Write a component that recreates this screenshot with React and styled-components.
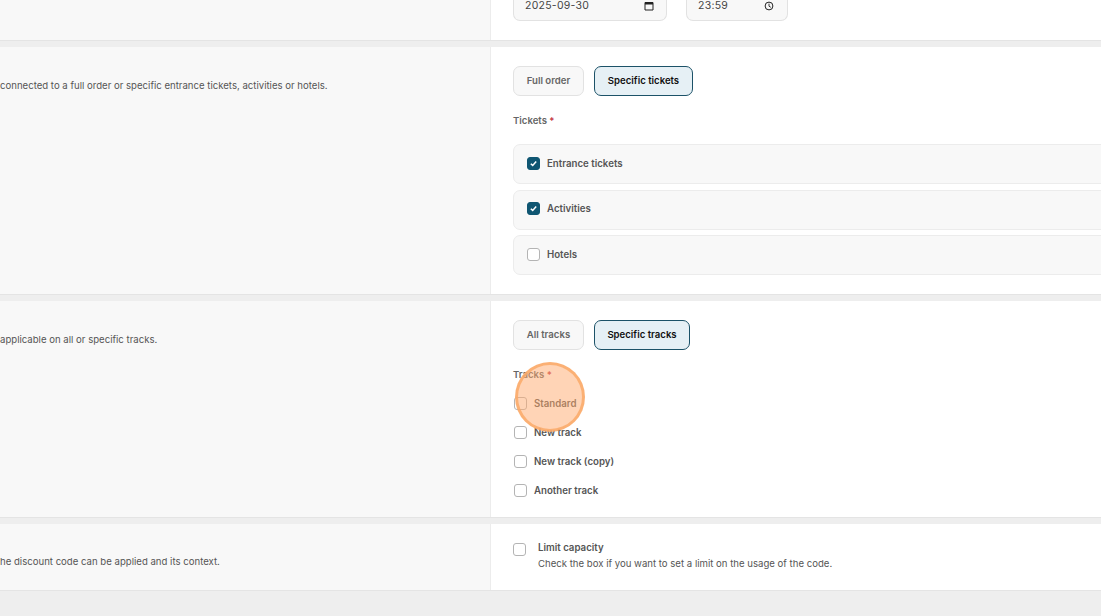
import React from "react";
import styled, { createGlobalStyle } from "styled-components";

const GlobalStyle = createGlobalStyle`
    html, body {
        margin: 0;
        height: 100%;
        overflow: hidden;
        background: #eeeeee;
        font-family: Inter, "Liberation Sans", sans-serif;
    }
`;

const Page = styled.div`
    position: relative;
    width: 1101px;
    height: 616px;
    overflow: hidden;
    display: flex;
    flex-direction: column;
    gap: 6px;
`;

const Section = styled.section`
    display: grid;
    grid-template-columns: 491px 1fr;
    height: ${props => props.$height}px;
    flex: none;
    border-bottom: 1px solid #e4e4e4;
    box-sizing: border-box;
`;

const Side = styled.div`
    background: #f8f8f8;
    border-right: 1px solid #ececec;
    padding-top: ${props => props.$top || 0}px;
    font-size: 9.6px;
    line-height: 14px;
    color: #555555;
    white-space: nowrap;
    overflow: hidden;
`;

const Main = styled.div`
    background: #ffffff;
    padding: ${props => props.$top}px 0 0 22px;
    min-width: 0;
    overflow: hidden;
`;

const Fields = styled.div`
    display: flex;
    gap: 19px;
`;

const Field = styled.div`
    width: ${props => props.$width}px;
    height: 21px;
    box-sizing: border-box;
    display: flex;
    align-items: center;
    justify-content: space-between;
    padding: 0 ${props => props.$right}px 9px 11px;
    background: #f8f8f8;
    border: 1px solid #e2e2e2;
    border-top: 0;
    border-radius: 0 0 7px 7px;
    font-size: 10.5px;
    line-height: 11px;
    letter-spacing: 0.25px;
    color: #444444;
`;

const Toggle = styled.div`
    display: flex;
    gap: 10px;
`;

const Choice = styled.div`
    height: 30px;
    box-sizing: border-box;
    width: ${props => props.$width}px;
    display: flex;
    align-items: center;
    justify-content: center;
    padding-bottom: 1px;
    border-radius: 7px;
    font-size: 9.6px;
    font-weight: 600;
    background: ${props => (props.$active ? "#e6f0f5" : "#f8f8f8")};
    border: 1px solid ${props => (props.$active ? "#1c5268" : "#e2e2e2")};
    color: ${props => (props.$active ? "#111111" : "#666666")};
`;

const FieldLabel = styled.div`
    margin-top: 18px;
    font-size: 9.6px;
    line-height: 14px;
    font-weight: 600;
    color: #666666;
    span {
        color: #c22f3a;
    }
`;

const TicketList = styled.div`
    margin: 16px -12px 0 0;
    display: flex;
    flex-direction: column;
    gap: 5.25px;
`;

const TicketRow = styled.div`
    height: 40.25px;
    box-sizing: border-box;
    display: flex;
    align-items: center;
    gap: 7px;
    padding: 0 0 2px 13px;
    background: #f8f8f8;
    border: 1px solid #ececec;
    border-radius: 7px;
`;

const TrackList = styled.div`
    margin: 15px 0 0 1px;
    display: flex;
    flex-direction: column;
    gap: 16px;
`;

const TrackRow = styled.div`
    height: 13px;
    display: flex;
    align-items: center;
    gap: 7px;
`;

const Box = styled.span`
    flex: none;
    width: 13px;
    height: 13px;
    box-sizing: border-box;
    display: flex;
    align-items: center;
    justify-content: center;
    border-radius: 3px;
    background: ${props => (props.$checked ? "#0f5672" : "#ffffff")};
    border: 1px solid ${props => (props.$checked ? "#0f5672" : "#b4b4b4")};
`;

const OptionText = styled.span`
    font-size: 9.7px;
    line-height: 13px;
    font-weight: 600;
    color: #555555;
`;

const LimitRow = styled.div`
    display: flex;
    gap: 12px;
`;

const LimitBox = styled(Box)`
    margin-top: 2px;
`;

const LimitTitle = styled.div`
    font-size: 9.7px;
    line-height: 13px;
    font-weight: 600;
    color: #555555;
`;

const LimitHint = styled.div`
    margin-top: 3px;
    font-size: 9.6px;
    line-height: 14px;
    color: #555555;
`;

const Cursor = styled.div`
    position: absolute;
    left: 515px;
    top: 362px;
    width: 70px;
    height: 70px;
    box-sizing: border-box;
    border-radius: 50%;
    background: rgba(255, 170, 110, 0.5);
    border: 3px solid rgba(250, 170, 105, 0.85);
`;

function Check() {
    return (
        <svg width="9" height="9" viewBox="0 0 9 9" fill="none">
            <path d="M1.8 4.7 3.7 6.4 7.2 2.6" stroke="#ffffff" strokeWidth="1.5" />
        </svg>
    );
}

function CalendarIcon() {
    return (
        <svg width="10" height="10" viewBox="0 0 10 10" fill="none">
            <path d="M1 1.5h8v7.5H1z" stroke="#222222" strokeWidth="1" />
            <path d="M1 2h8v1.5H1z" fill="#222222" />
        </svg>
    );
}

function ClockIcon() {
    return (
        <svg width="10" height="10" viewBox="0 0 10 10" fill="none">
            <circle cx="5" cy="5" r="3.9" stroke="#222222" strokeWidth="1" />
            <path d="M5 2.6V5.2L6.8 6.3" stroke="#222222" strokeWidth="0.9" />
        </svg>
    );
}

const tickets = [
    { name: "Entrance tickets", checked: true },
    { name: "Activities", checked: true },
    { name: "Hotels", checked: false }
];

const tracks = ["Standard", "New track", "New track (copy)", "Another track"];

export default function App() {
    return (
        <Page>
            <GlobalStyle />
            <Section $height={41}>
                <Side />
                <Main $top={0}>
                    <Fields>
                        <Field $width={154} $right={12}>
                            2025-09-30
                            <CalendarIcon />
                        </Field>
                        <Field $width={102} $right={13}>
                            23:59
                            <ClockIcon />
                        </Field>
                    </Fields>
                </Main>
            </Section>
            <Section $height={248}>
                <Side $top={32}>connected to a full order or specific entrance tickets, activities or hotels.</Side>
                <Main $top={19}>
                    <Toggle>
                        <Choice $width={71}>Full order</Choice>
                        <Choice $width={99} $active>Specific tickets</Choice>
                    </Toggle>
                    <FieldLabel>
                        Tickets <span>*</span>
                    </FieldLabel>
                    <TicketList>
                        {tickets.map(ticket => (
                            <TicketRow key={ticket.name}>
                                <Box $checked={ticket.checked}>{ticket.checked && <Check />}</Box>
                                <OptionText>{ticket.name}</OptionText>
                            </TicketRow>
                        ))}
                    </TicketList>
                </Main>
            </Section>
            <Section $height={217}>
                <Side $top={32}>applicable on all or specific tracks.</Side>
                <Main $top={19}>
                    <Toggle>
                        <Choice $width={71}>All tracks</Choice>
                        <Choice $width={96} $active>Specific tracks</Choice>
                    </Toggle>
                    <FieldLabel>
                        Tracks <span>*</span>
                    </FieldLabel>
                    <TrackList>
                        {tracks.map(track => (
                            <TrackRow key={track}>
                                <Box />
                                <OptionText>{track}</OptionText>
                            </TrackRow>
                        ))}
                    </TrackList>
                </Main>
            </Section>
            <Section $height={67}>
                <Side $top={31}>he discount code can be applied and its context.</Side>
                <Main $top={17}>
                    <LimitRow>
                        <LimitBox />
                        <div>
                            <LimitTitle>Limit capacity</LimitTitle>
                            <LimitHint>Check the box if you want to set a limit on the usage of the code.</LimitHint>
                        </div>
                    </LimitRow>
                </Main>
            </Section>
            <Cursor />
        </Page>
    );
}
